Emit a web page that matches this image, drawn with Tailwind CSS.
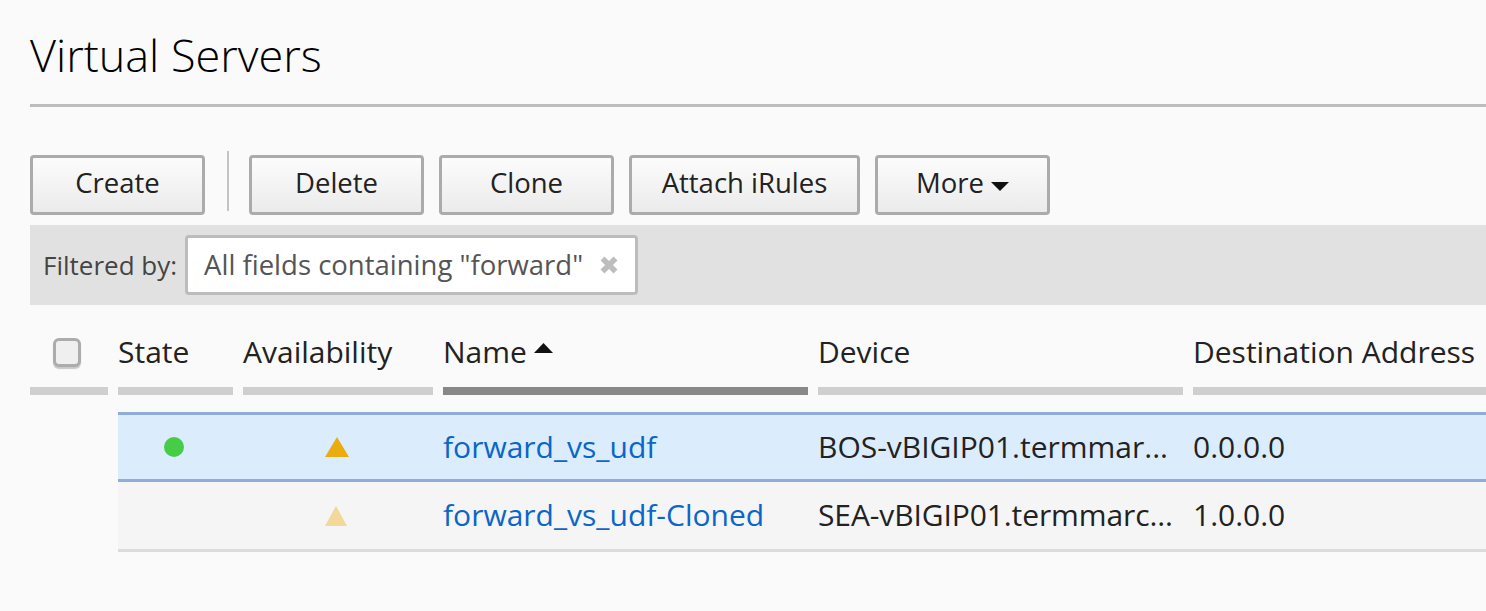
<!DOCTYPE html>
<html lang="en">
  <head>
    <meta charset="UTF-8" />
    <title>Virtual Servers</title>
    <script src="https://cdn.jsdelivr.net/npm/@tailwindcss/browser@4"></script>
  </head>
  <body class="bg-[#fafafa] text-[#111] font-['Open_Sans',sans-serif] h-[611px] overflow-hidden">
    <div class="pl-[30px]">
      <!-- Title -->
      <header class="h-[107px] border-b-[3px] border-[#bdbdbd]">
        <h1 class="pt-[27px] text-[45px] leading-[56px] font-light text-black">Virtual Servers</h1>
      </header>

      <!-- Toolbar -->
      <div class="mt-[48px] flex items-start gap-[15px] h-[60px] text-[27.5px] text-[#222]">
        <button class="w-[175px] h-[60px] pb-[4px] rounded-[4px] border-[3px] border-[#ababab] bg-gradient-to-b from-[#fcfcfc] to-[#ebebeb]">Create</button>
        <div class="w-[2px] h-[60px] -mt-[4px] ml-[7px] mr-[5px] bg-[#c4c4c4]"></div>
        <button class="w-[175px] h-[60px] pb-[4px] rounded-[4px] border-[3px] border-[#ababab] bg-gradient-to-b from-[#fcfcfc] to-[#ebebeb]">Delete</button>
        <button class="w-[175px] h-[60px] pb-[4px] rounded-[4px] border-[3px] border-[#ababab] bg-gradient-to-b from-[#fcfcfc] to-[#ebebeb]">Clone</button>
        <button class="w-[231px] h-[60px] pb-[4px] rounded-[4px] border-[3px] border-[#ababab] bg-gradient-to-b from-[#fcfcfc] to-[#ebebeb]">Attach iRules</button>
        <button class="w-[175px] h-[60px] pb-[4px] rounded-[4px] border-[3px] border-[#ababab] bg-gradient-to-b from-[#fcfcfc] to-[#ebebeb] flex items-center justify-center gap-[7px]">
          More
          <svg width="18" height="9" viewBox="0 0 18 9" class="mt-[7px]"><path d="M0 0H18L9 9Z" fill="#111" /></svg>
        </button>
      </div>

      <!-- Filter bar -->
      <div class="mt-[10px] h-[80px] bg-[#e1e1e1] flex items-center pl-[13px] gap-[8px] text-[26px]">
        <span class="text-[#444]">Filtered by:</span>
        <div class="w-[453px] h-[60px] rounded-[4px] border-[3px] border-[#bcbcbc] bg-white flex items-center pl-[16px] gap-[17px] text-[27.5px] text-[#555] whitespace-nowrap">
          All fields containing "forward"
          <svg width="18" height="18" viewBox="0 0 18 18" class="shrink-0"><path d="M2.5 2.5L15.5 15.5M15.5 2.5L2.5 15.5" stroke="#bdbdbd" stroke-width="5.5" /></svg>
        </div>
      </div>

      <!-- Table -->
      <div class="grid grid-cols-[78px_115px_190px_365px_365px_1fr] gap-x-[10px] text-[30px] text-[#222]">
        <div class="h-[90px] border-b-[8px] border-[#cfcfcf] flex justify-start pl-[23px] pt-[33px]">
          <span class="block w-[28px] h-[29px] rounded-[6px] border-[3px] border-[#acacac] bg-[#efefef] shadow-[0_2px_1px_#c8c8c8]"></span>
        </div>
        <div class="h-[90px] border-b-[8px] border-[#cfcfcf] pt-[28px] leading-[38px]">State</div>
        <div class="h-[90px] border-b-[8px] border-[#cfcfcf] pt-[28px] leading-[38px]">Availability</div>
        <div class="h-[90px] border-b-[8px] border-[#888888] pt-[28px] leading-[38px] flex items-start gap-[7px]">
          Name
          <svg width="19" height="10" viewBox="0 0 19 10" class="mt-[10px]"><path d="M0 10H19L9.5 0Z" fill="#111" /></svg>
        </div>
        <div class="h-[90px] border-b-[8px] border-[#cfcfcf] pt-[28px] leading-[38px]">Device</div>
        <div class="h-[90px] border-b-[8px] border-[#cfcfcf] pt-[28px] leading-[38px] whitespace-nowrap">Destination Address</div>

        <!-- Row 1 -->
        <div class="col-start-2 col-span-5 mt-[17px] -mr-[10px] h-[70px] border-y-[3px] border-[#8eaddc] bg-[#dbecfc] grid grid-cols-[115px_190px_365px_365px_1fr] gap-x-[10px] items-center">
          <div class="flex justify-center"><span class="block w-[20px] h-[20px] -ml-[4px] rounded-full bg-[#47cc47]"></span></div>
          <div class="flex justify-center">
            <svg width="24" height="20" viewBox="0 0 24 20" class="-ml-[3px]"><path d="M0 20H24L12 0Z" fill="#ebac10" /></svg>
          </div>
          <a class="-mt-[2px] text-[#0a66c8]">forward_vs_udf</a>
          <div class="-mt-[2px] whitespace-nowrap">BOS-vBIGIP01.termmar...</div>
          <div class="-mt-[2px]">0.0.0.0</div>
        </div>

        <!-- Row 2 -->
        <div class="col-start-2 col-span-5 -mr-[10px] h-[70px] border-b-[3px] border-[#dcdcdc] bg-[#f5f5f5] grid grid-cols-[115px_190px_365px_365px_1fr] gap-x-[10px] items-center">
          <div></div>
          <div class="flex justify-center">
            <svg width="22" height="20" viewBox="0 0 22 20" class="-ml-[4px]"><path d="M0 20H22L11 0Z" fill="#f2d899" /></svg>
          </div>
          <a class="-mt-[2px] text-[#0a66c8]">forward_vs_udf-Cloned</a>
          <div class="-mt-[2px] whitespace-nowrap tracking-[-0.1px]">SEA-vBIGIP01.termmarc...</div>
          <div class="-mt-[2px]">1.0.0.0</div>
        </div>
      </div>
    </div>
  </body>
</html>
